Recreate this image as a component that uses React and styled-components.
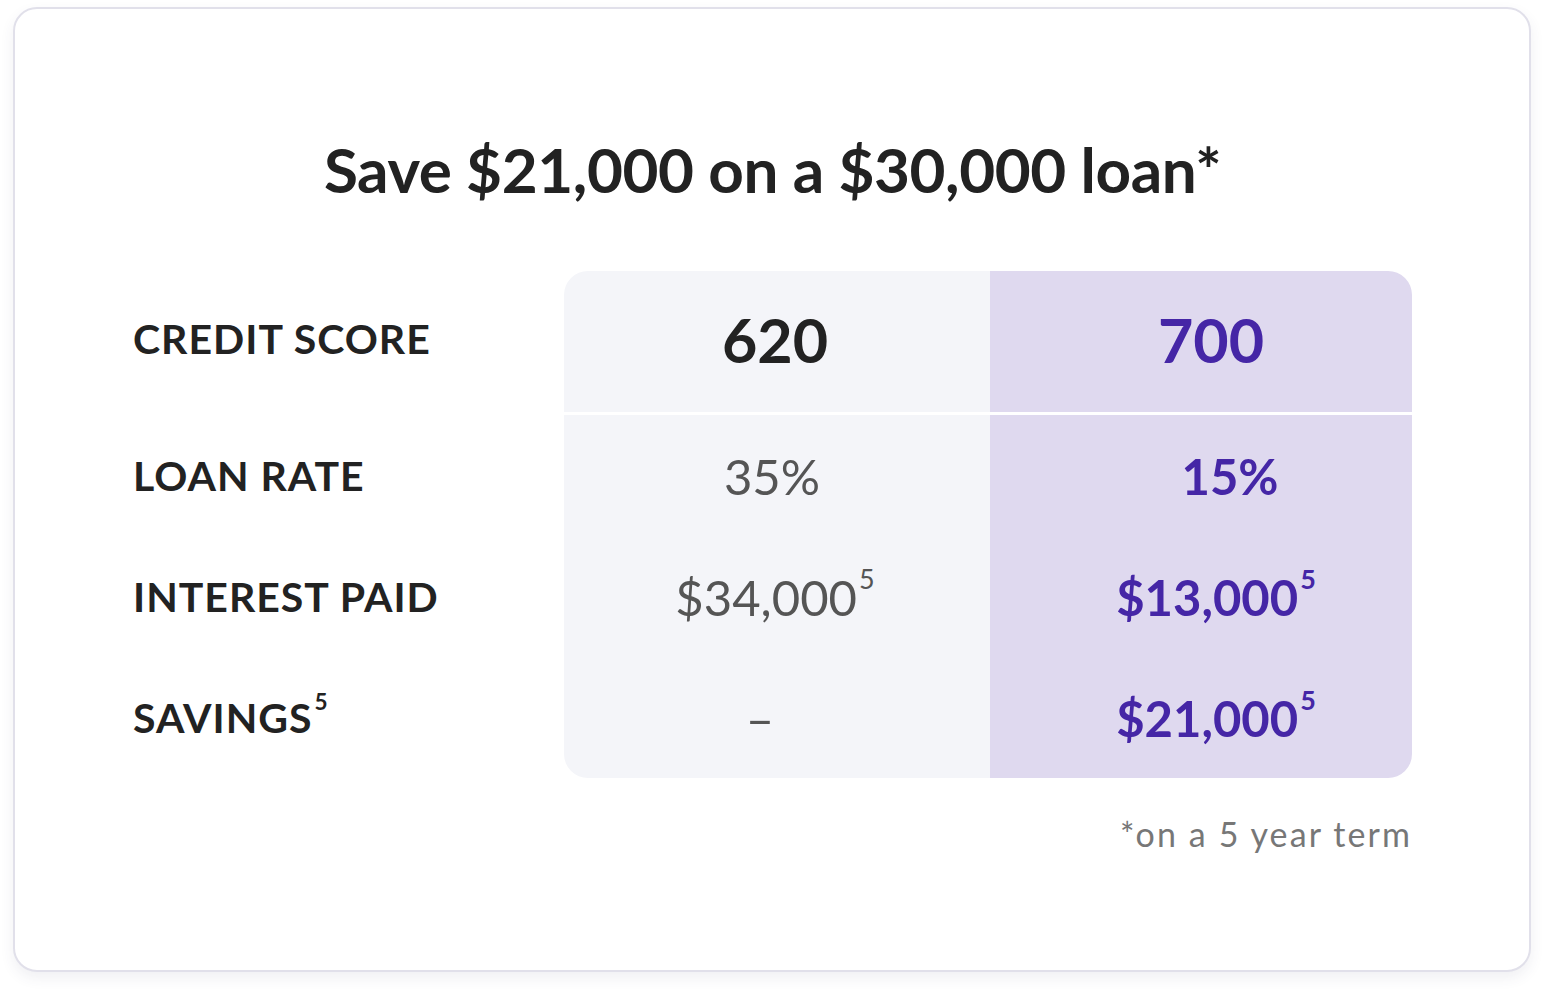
import React from "react";
import styled, { createGlobalStyle } from "styled-components";

const Global = createGlobalStyle`
  html, body { margin: 0; padding: 0; background: #ffffff; }
  body { font-family: Lato, "Open Sans", sans-serif; }
`;

const Page = styled.div`
  padding: 7px 14px 21px 13px;
`;

const Card = styled.div`
  box-sizing: border-box;
  height: 965px;
  border: 2px solid #e1e0ea;
  border-radius: 24px;
  background: #fff;
  box-shadow: 0 6px 14px rgba(60, 60, 100, 0.08);
  padding: 115px 117px 0 118px;
  display: flex;
  flex-direction: column;
`;

const Title = styled.h1`
  margin: 0;
  text-align: center;
  font-family: Lato, sans-serif;
  font-weight: 700;
  font-size: 62px;
  line-height: 90px;
  color: #222222;
  letter-spacing: -0.4px;
`;

const Table = styled.div`
  margin-top: 57px;
  display: grid;
  grid-template-columns: 431px 426px 1fr;
  grid-template-rows: 144px repeat(3, 121px);
`;

const Label = styled.div`
  display: flex;
  align-items: center;
  font-family: Lato, sans-serif;
  font-weight: 700;
  font-size: 41px;
  color: #222;
  letter-spacing: 1px;
  padding-bottom: ${(p) => (p.$header ? "10px" : "0")};
  box-sizing: border-box;
`;

const Cell = styled.div`
  display: flex;
  align-items: center;
  justify-content: center;
  box-sizing: border-box;
  background: ${(p) => (p.$accent ? "#dfd9ef" : "#f4f5f9")};
  color: ${(p) => (p.$accent ? "#4526a6" : p.$strong ? "#222" : "#555")};
  font-family: Lato, sans-serif;
  font-weight: ${(p) => (p.$strong || p.$accent ? 700 : 400)};
  font-size: ${(p) => (p.$header ? "61px" : "49px")};
  border-bottom: ${(p) => (p.$header ? "3px solid #ffffff" : "none")};
  padding-left: ${(p) => Math.max(p.$shift || 0, 0)}px;
  padding-right: ${(p) => Math.max(-(p.$shift || 0), 0)}px;
  padding-bottom: ${(p) => (p.$header ? "4px" : "0")};
  border-top-left-radius: ${(p) => (p.$tl ? "24px" : "0")};
  border-bottom-left-radius: ${(p) => (p.$bl ? "24px" : "0")};
  border-top-right-radius: ${(p) => (p.$tr ? "24px" : "0")};
  border-bottom-right-radius: ${(p) => (p.$br ? "24px" : "0")};
`;

const Sup = styled.sup`
  font-size: 0.55em;
  vertical-align: 0;
  position: relative;
  top: -0.68em;
  margin-left: 2px;
`;

const LabelSup = styled.sup`
  font-size: 0.55em;
  vertical-align: 0;
  position: relative;
  top: -0.7em;
  margin-left: 2px;
`;

const Note = styled.div`
  margin-top: 35px;
  text-align: right;
  font-family: Lato, sans-serif;
  font-weight: 400;
  font-size: 34px;
  color: #777;
  letter-spacing: 2.1px;
`;

export default function App() {
  return (
    <>
      <Global />
      <Page>
        <Card>
          <Title>Save $21,000 on a $30,000 loan*</Title>
          <Table>
            <Label $header>CREDIT SCORE</Label>
            <Cell $header $strong $tl $shift={-4}>620</Cell>
            <Cell $header $accent $tr $shift={20}>700</Cell>

            <Label>LOAN RATE</Label>
            <Cell $shift={-10}>35%</Cell>
            <Cell $accent $shift={58}>15%</Cell>

            <Label>INTEREST PAID</Label>
            <Cell $shift={-4}>$34,000<Sup>5</Sup></Cell>
            <Cell $accent $shift={30}>$13,000<Sup>5</Sup></Cell>

            <Label>SAVINGS<LabelSup>5</LabelSup></Label>
            <Cell $bl $shift={-34}>–</Cell>
            <Cell $accent $br $shift={30}>$21,000<Sup>5</Sup></Cell>
          </Table>
          <Note>*on a 5 year term</Note>
        </Card>
      </Page>
    </>
  );
}
